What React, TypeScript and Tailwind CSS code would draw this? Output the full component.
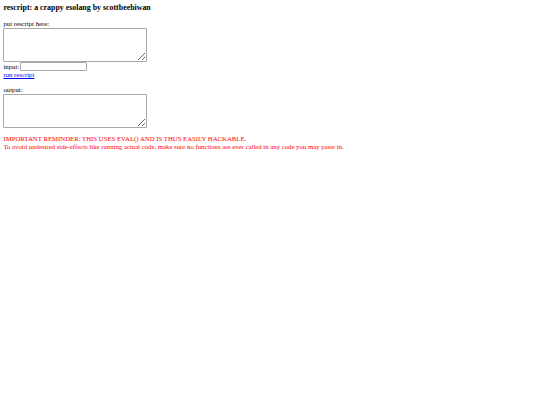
export default function App() {
  return (
    <div
      className="min-h-[405px] bg-white px-[3.4px] pt-[3px] text-[6.75px] leading-[8px] text-black"
      style={{ fontFamily: '"Liberation Serif", "Times New Roman", serif' }}
    >
      <h3 className="mb-[7px] text-[7.9px] font-bold leading-[10px]">
        rescript: a crappy esolang by scottbeebiwan
      </h3>
      <div>put rescript here:</div>
      <textarea className="block h-[34px] w-[144px] resize rounded-[1px] border border-[#a9a9a9] bg-white" />
      <div className="flex h-[9px] items-center">
        <span>input:</span>
        <input
          type="text"
          className="ml-[1px] h-[9px] w-[67px] rounded-[1px] border border-[#a9a9a9] bg-white"
        />
      </div>
      <a href="#" className="block w-fit text-[#0000ee] underline">
        run rescript
      </a>
      <div className="h-[7px]" />
      <div>output:</div>
      <textarea className="block h-[34px] w-[144px] resize rounded-[1px] border border-[#a9a9a9] bg-white" />
      <div className="h-[7px]" />
      <div className="text-[#ff0000]">
        IMPORTANT REMINDER: THIS USES EVAL() AND IS THUS EASILY HACKABLE.
        <br />
        To avoid undesired side-effects like running actual code, make sure no functions are ever called in any code you may paste in.
      </div>
    </div>
  );
}
